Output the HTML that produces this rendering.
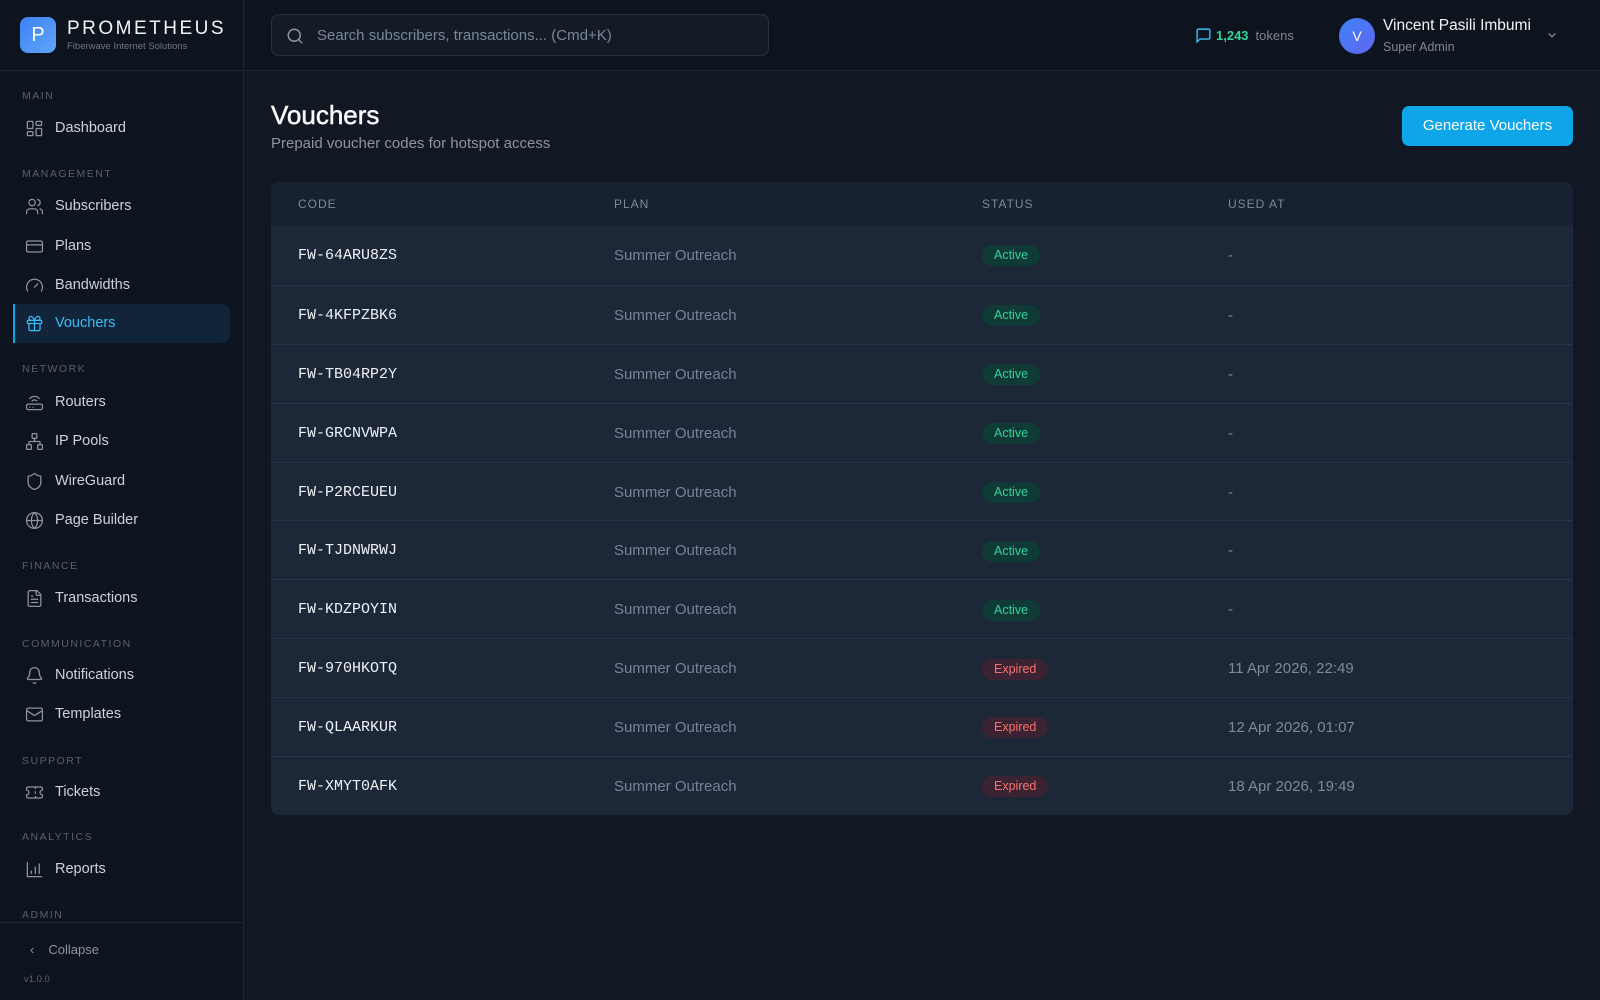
<!DOCTYPE html>
<html><head><meta charset="utf-8"><style>
*{box-sizing:border-box;margin:0;padding:0}
body{width:1600px;height:1000px;overflow:hidden;background:#111823;font-family:"Liberation Sans",sans-serif;color:#e5e7eb;position:relative}
.sb{position:absolute;left:0;top:0;width:244px;height:1000px;background:#0e141d;border-right:1px solid #1e2734}
.logo{height:71px;border-bottom:1px solid #1e2734;position:relative}
.lb{position:absolute;left:20px;top:17px;width:36px;height:36px;border-radius:8px;background:linear-gradient(135deg,#3b82f6,#60a5fa);color:#fff;font-size:20px;line-height:36px;text-align:center}
.lt{position:absolute;left:67px;top:18px;font-size:19px;letter-spacing:2.5px;color:#f1f5f9}
.ls{position:absolute;left:67px;top:41px;font-size:9.5px;color:#6b7686}
.sec{position:absolute;left:22px;font-size:10.5px;letter-spacing:1.5px;color:#566071}
.it{position:absolute;left:13px;width:217px;height:39px;font-size:14.5px;color:#cbd2dc;line-height:39px;padding-left:42px}
.it svg{position:absolute;left:12px;top:10px;width:19px;height:19px;fill:none;stroke:#8a94a4;stroke-width:1.6;stroke-linecap:round;stroke-linejoin:round}
.it.act{background:#12243a;color:#38bdf8;border-left:2px solid #0ea5e9;border-radius:0 8px 8px 0;padding-left:40px}
.it.act svg{stroke:#38bdf8;left:10px}
.hd{position:absolute;left:245px;top:0;right:0;height:71px;background:#0e141d;border-bottom:1px solid #1e2734}
.search{position:absolute;left:26px;top:14px;width:498px;height:42px;border:1px solid #273243;border-radius:8px;background:#131b27;color:#7b8696;font-size:15px;line-height:42px;padding-left:45px}
.search svg{position:absolute;left:14px;top:12px}
.tbl{position:absolute;left:271px;top:182px;width:1302px;height:633px;border-radius:8px;background:#1c2738;overflow:hidden}
.th{height:44px;background:#172131;font-size:12px;letter-spacing:1px;color:#7d8898;position:relative}
.th span,.row span{position:absolute;top:0}
.th span{line-height:45px}
.row{height:58.9px;border-top:1px solid #283447;position:relative;line-height:60px}
.c1{left:27px}.c2{left:343px}.c3{left:711px}.c4{left:957px}
.code{font-family:"Liberation Mono",monospace;font-size:15px;color:#eef1f5}
.plan{font-size:15px;color:#788395}
.bd{display:inline-block;line-height:21px;height:21px;padding:0 12px;border-radius:11px;font-size:12.5px;vertical-align:middle}
.ac{background:#0f3a35;color:#34d399}.ex{background:#3c2331;color:#f87171}
.dt{font-size:15px;color:#7e8999}
</style></head><body>
<div class="sb">
 <div class="logo"><div class="lb">P</div><div class="lt">PROMETHEUS</div><div class="ls">Fiberwave Internet Solutions</div></div>
 <div class="sec" style="top:90px">MAIN</div>
 <div class="it" style="top:109px"><svg viewBox="0 0 24 24"><rect x="3" y="3" width="7" height="9" rx="1"/><rect x="14" y="3" width="7" height="5" rx="1"/><rect x="14" y="12" width="7" height="9" rx="1"/><rect x="3" y="16" width="7" height="5" rx="1"/></svg>Dashboard</div>
 <div class="sec" style="top:168px">MANAGEMENT</div>
 <div class="it" style="top:187px"><svg viewBox="0 0 24 24"><circle cx="9" cy="7" r="4"/><path d="M2 21v-2a4 4 0 0 1 4-4h6a4 4 0 0 1 4 4v2M16 3.1a4 4 0 0 1 0 7.8M22 21v-2a4 4 0 0 0-3-3.9"/></svg>Subscribers</div>
 <div class="it" style="top:227px"><svg viewBox="0 0 24 24"><rect x="2" y="5" width="20" height="14" rx="2"/><path d="M2 10h20"/></svg>Plans</div>
 <div class="it" style="top:266px"><svg viewBox="0 0 24 24"><path d="M12 14l4-4M3.3 19a10 10 0 1 1 17.4 0"/></svg>Bandwidths</div>
 <div class="it act" style="top:304px"><svg viewBox="0 0 24 24"><rect x="3" y="8" width="18" height="4" rx="1"/><path d="M12 8v13M19 12v7a2 2 0 0 1-2 2H7a2 2 0 0 1-2-2v-7M7.5 8a2.5 2.5 0 0 1 0-5C10 3 12 8 12 8s2-5 4.5-5a2.5 2.5 0 0 1 0 5"/></svg>Vouchers</div>
 <div class="sec" style="top:363px">NETWORK</div>
 <div class="it" style="top:383px"><svg viewBox="0 0 24 24"><rect x="2" y="14" width="20" height="7" rx="2"/><path d="M6 18h.01M10 18h.01M15 10a4 4 0 0 0-6 0M18 7a8 8 0 0 0-12 0"/></svg>Routers</div>
 <div class="it" style="top:422px"><svg viewBox="0 0 24 24"><rect x="16" y="16" width="6" height="6" rx="1"/><rect x="2" y="16" width="6" height="6" rx="1"/><rect x="9" y="2" width="6" height="6" rx="1"/><path d="M5 16v-3a1 1 0 0 1 1-1h12a1 1 0 0 1 1 1v3M12 12V8"/></svg>IP Pools</div>
 <div class="it" style="top:462px"><svg viewBox="0 0 24 24"><path d="M20 13c0 5-3.5 7.5-7.7 9a1 1 0 0 1-.6 0C7.5 20.5 4 18 4 13V6a1 1 0 0 1 1-1c2 0 4.5-1.2 6.2-2.7a1.2 1.2 0 0 1 1.6 0C14.5 3.8 17 5 19 5a1 1 0 0 1 1 1z"/></svg>WireGuard</div>
 <div class="it" style="top:501px"><svg viewBox="0 0 24 24"><circle cx="12" cy="12" r="10"/><path d="M12 2a14.5 14.5 0 0 0 0 20 14.5 14.5 0 0 0 0-20M2 12h20"/></svg>Page Builder</div>
 <div class="sec" style="top:560px">FINANCE</div>
 <div class="it" style="top:579px"><svg viewBox="0 0 24 24"><path d="M15 2H6a2 2 0 0 0-2 2v16a2 2 0 0 0 2 2h12a2 2 0 0 0 2-2V7zM14 2v4a2 2 0 0 0 2 2h4M10 9H8M16 13H8M16 17H8"/></svg>Transactions</div>
 <div class="sec" style="top:638px">COMMUNICATION</div>
 <div class="it" style="top:656px"><svg viewBox="0 0 24 24"><path d="M10.3 21a1.94 1.94 0 0 0 3.4 0M3.3 15.3A1 1 0 0 0 4 17h16a1 1 0 0 0 .7-1.7C19.4 14 18 12.6 18 8A6 6 0 0 0 6 8c0 4.6-1.4 6-2.7 7.3"/></svg>Notifications</div>
 <div class="it" style="top:695px"><svg viewBox="0 0 24 24"><rect x="2" y="4" width="20" height="16" rx="2"/><path d="M22 7l-8.97 5.7a1.94 1.94 0 0 1-2.06 0L2 7"/></svg>Templates</div>
 <div class="sec" style="top:755px">SUPPORT</div>
 <div class="it" style="top:773px"><svg viewBox="0 0 24 24"><path d="M2 9a3 3 0 0 1 0 6v2a2 2 0 0 0 2 2h16a2 2 0 0 0 2-2v-2a3 3 0 0 1 0-6V7a2 2 0 0 0-2-2H4a2 2 0 0 0-2 2ZM13 5v2M13 17v2M13 11v2"/></svg>Tickets</div>
 <div class="sec" style="top:831px">ANALYTICS</div>
 <div class="it" style="top:850px"><svg viewBox="0 0 24 24"><path d="M3 3v18h18M8 17v-3M13 17V9M18 17V5"/></svg>Reports</div>
 <div class="sec" style="top:909px">ADMIN</div>
 <div style="position:absolute;left:0;top:922px;width:243px;border-top:1px solid #1e2734;height:78px;background:#0e141d">
  <div style="position:absolute;left:30px;top:19px;font-size:13px;color:#8a94a4"><span style="margin-right:14px">&#8249;</span>Collapse</div>
  <div style="position:absolute;left:24px;top:51px;font-size:9.5px;color:#566071">v1.0.0</div>
 </div>
</div>
<div class="hd">
 <div class="search"><svg width="18" height="18" viewBox="0 0 24 24" fill="none" stroke="#8a94a4" stroke-width="2" stroke-linecap="round"><circle cx="11" cy="11" r="8"/><path d="M21 21l-4.3-4.3"/></svg>Search subscribers, transactions... (Cmd+K)</div>
 <div style="position:absolute;left:950px;top:27px;font-size:13px;color:#7b8696"><svg width="17" height="17" viewBox="0 0 24 24" fill="none" stroke="#38bdf8" stroke-width="2" style="vertical-align:-4px;margin-right:4px"><path d="M21 15a2 2 0 0 1-2 2H7l-4 4V5a2 2 0 0 1 2-2h14a2 2 0 0 1 2 2z"/></svg><b style="color:#34d399;margin-right:7px">1,243</b>tokens</div>
 <div style="position:absolute;left:1094px;top:18px;width:36px;height:36px;border-radius:50%;background:linear-gradient(135deg,#3b82f6,#6366f1);color:#fff;text-align:center;line-height:36px;font-size:14px">V</div>
 <div style="position:absolute;left:1138px;top:17px;font-size:15.5px;color:#f1f5f9">Vincent Pasili Imbumi</div>
 <div style="position:absolute;left:1138px;top:40px;font-size:12.5px;color:#7b8696">Super Admin</div>
 <svg style="position:absolute;left:1300px;top:28px" width="14" height="14" viewBox="0 0 24 24" fill="none" stroke="#8a94a4" stroke-width="2"><path d="M6 9l6 6 6-6"/></svg>
</div>
<div style="position:absolute;left:271px;top:100px;font-size:26px;font-weight:normal;color:#f8fafc;-webkit-text-stroke:0.5px #f8fafc">Vouchers</div>
<div style="position:absolute;left:271px;top:135px;font-size:15px;color:#8a94a4">Prepaid voucher codes for hotspot access</div>
<div style="position:absolute;left:1402px;top:106px;width:171px;height:40px;border-radius:7px;background:#0ea5e9;color:#fff;font-size:15px;text-align:center;line-height:40px">Generate Vouchers</div>
<div class="tbl">
 <div class="th"><span class="c1">CODE</span><span class="c2">PLAN</span><span class="c3">STATUS</span><span class="c4">USED AT</span></div>
 <div class="row" style="border-top:none"><span class="c1 code">FW-64ARU8ZS</span><span class="c2 plan">Summer Outreach</span><span class="c3"><span class="bd ac" style="position:static">Active</span></span><span class="c4 dt">-</span></div>
 <div class="row"><span class="c1 code">FW-4KFPZBK6</span><span class="c2 plan">Summer Outreach</span><span class="c3"><span class="bd ac" style="position:static">Active</span></span><span class="c4 dt">-</span></div>
 <div class="row"><span class="c1 code">FW-TB04RP2Y</span><span class="c2 plan">Summer Outreach</span><span class="c3"><span class="bd ac" style="position:static">Active</span></span><span class="c4 dt">-</span></div>
 <div class="row"><span class="c1 code">FW-GRCNVWPA</span><span class="c2 plan">Summer Outreach</span><span class="c3"><span class="bd ac" style="position:static">Active</span></span><span class="c4 dt">-</span></div>
 <div class="row"><span class="c1 code">FW-P2RCEUEU</span><span class="c2 plan">Summer Outreach</span><span class="c3"><span class="bd ac" style="position:static">Active</span></span><span class="c4 dt">-</span></div>
 <div class="row"><span class="c1 code">FW-TJDNWRWJ</span><span class="c2 plan">Summer Outreach</span><span class="c3"><span class="bd ac" style="position:static">Active</span></span><span class="c4 dt">-</span></div>
 <div class="row"><span class="c1 code">FW-KDZPOYIN</span><span class="c2 plan">Summer Outreach</span><span class="c3"><span class="bd ac" style="position:static">Active</span></span><span class="c4 dt">-</span></div>
 <div class="row"><span class="c1 code">FW-970HKOTQ</span><span class="c2 plan">Summer Outreach</span><span class="c3"><span class="bd ex" style="position:static">Expired</span></span><span class="c4 dt">11 Apr 2026, 22:49</span></div>
 <div class="row"><span class="c1 code">FW-QLAARKUR</span><span class="c2 plan">Summer Outreach</span><span class="c3"><span class="bd ex" style="position:static">Expired</span></span><span class="c4 dt">12 Apr 2026, 01:07</span></div>
 <div class="row"><span class="c1 code">FW-XMYT0AFK</span><span class="c2 plan">Summer Outreach</span><span class="c3"><span class="bd ex" style="position:static">Expired</span></span><span class="c4 dt">18 Apr 2026, 19:49</span></div>
</div>
</body></html>
